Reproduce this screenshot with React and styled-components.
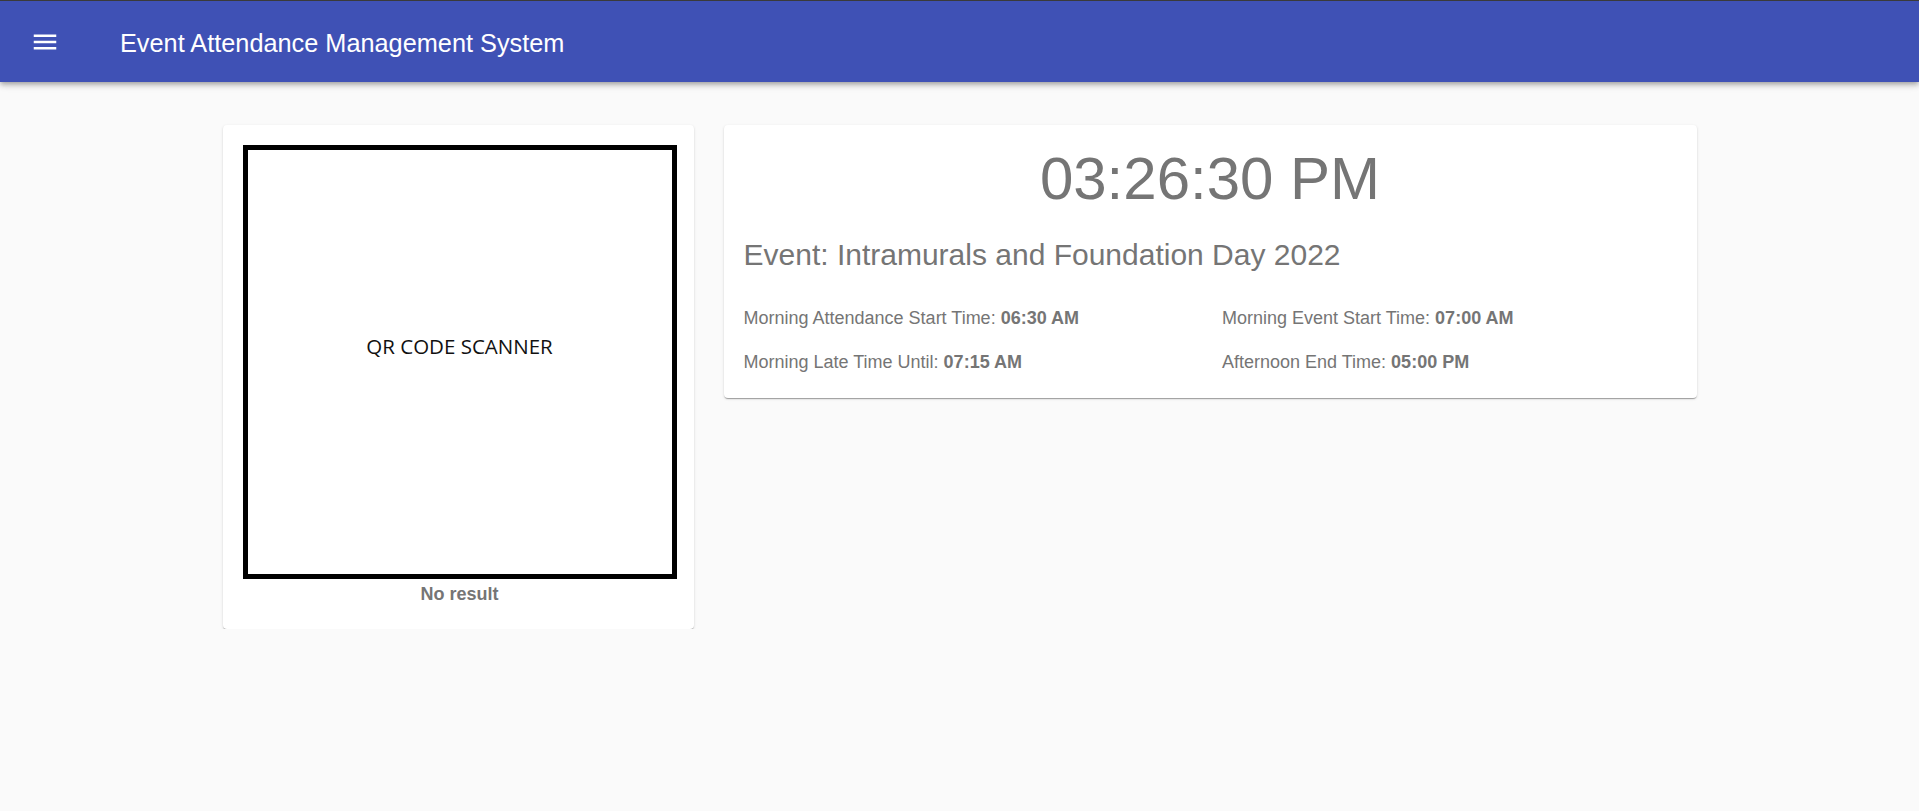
import React from "react";
import styled, { createGlobalStyle } from "styled-components";

const schedule = [
    { label: "Morning Attendance Start Time", value: "06:30 AM" },
    { label: "Morning Event Start Time", value: "07:00 AM" },
    { label: "Morning Late Time Until", value: "07:15 AM" },
    { label: "Afternoon End Time", value: "05:00 PM" },
];

export default function App() {
    return (
        <>
            <GlobalStyle />
            <AppBar>
                <MenuButton aria-label="menu">
                    <svg width="30" height="30" viewBox="0 0 24 24" fill="currentColor">
                        <path d="M3 18h18v-2H3v2zm0-5h18v-2H3v2zm0-7v2h18V6H3z" />
                    </svg>
                </MenuButton>
                <AppTitle>Event Attendance Management System</AppTitle>
            </AppBar>
            <Main>
                <ScannerCard>
                    <ScannerFrame>
                        <ScannerLabel>QR CODE SCANNER</ScannerLabel>
                    </ScannerFrame>
                    <ResultText>No result</ResultText>
                </ScannerCard>
                <InfoCard>
                    <Clock>03:26:30 PM</Clock>
                    <EventName>Event: Intramurals and Foundation Day 2022</EventName>
                    <ScheduleGrid>
                        {schedule.map((item, index) => (
                            <ScheduleItem key={index}>
                                {item.label}: <b>{item.value}</b>
                            </ScheduleItem>
                        ))}
                    </ScheduleGrid>
                </InfoCard>
            </Main>
        </>
    )
}

const GlobalStyle = createGlobalStyle`
    html, body {
        margin: 0;
        padding: 0;
        background-color: #fafafa;
        font-family: "Liberation Sans", Arial, sans-serif;
    }
`
const AppBar = styled.header`
    display: flex;
    align-items: center;
    height: 81px;
    padding-left: 30px;
    background-color: #3f51b5;
    border-top: 1px solid #3a3a3a;
    color: #fff;
    box-shadow: 0 2px 4px -1px rgba(0,0,0,0.2), 0 4px 5px 0 rgba(0,0,0,0.14), 0 1px 10px 0 rgba(0,0,0,0.12);
`
const MenuButton = styled.div`
    display: flex;
    width: 30px;
    height: 30px;
    margin-top: 1px;
    color: #fff;
`
const AppTitle = styled.h1`
    margin: 3px 0 0 60px;
    font-size: 25.3px;
    font-weight: 400;
    line-height: 1.6;
`
const Main = styled.main`
    display: flex;
    align-items: flex-start;
    gap: 30px;
    width: 1474px;
    margin: 43px auto 0;
`
const Card = styled.section`
    box-sizing: border-box;
    background-color: #fff;
    border-radius: 4px;
    box-shadow: 0 2px 1px -1px rgba(0,0,0,0.2), 0 1px 1px 0 rgba(0,0,0,0.14), 0 1px 3px 0 rgba(0,0,0,0.12);
`
const ScannerCard = styled(Card)`
    display: flex;
    flex-direction: column;
    align-items: center;
    width: 471px;
    padding: 20px 17px 21px 20px;
`
const ScannerFrame = styled.div`
    box-sizing: border-box;
    display: flex;
    flex-direction: column;
    align-items: center;
    width: 434px;
    height: 434px;
    padding-top: 182px;
    border: 5px solid #000;
`
const ScannerLabel = styled.span`
    font-family: "Open Sans", sans-serif;
    font-size: 20.5px;
    color: #111;
`
const ResultText = styled.div`
    margin-top: 2px;
    font-size: 18px;
    font-weight: 700;
    line-height: 1.5;
    color: #757575;
`
const InfoCard = styled(Card)`
    width: 973px;
    padding: 18px 20px 22px;
    color: #757575;
`
const Clock = styled.div`
    font-size: 60px;
    line-height: 1.2;
    text-align: center;
`
const EventName = styled.h2`
    margin: 22px 0 0;
    font-size: 30px;
    font-weight: 400;
    line-height: 1.2;
`
const ScheduleGrid = styled.div`
    display: grid;
    grid-template-columns: 1fr 1fr;
    column-gap: 24px;
    row-gap: 17px;
    margin-top: 32px;
`
const ScheduleItem = styled.div`
    font-size: 18px;
    line-height: 1.5;

    b {
        font-weight: 700;
    }
`
